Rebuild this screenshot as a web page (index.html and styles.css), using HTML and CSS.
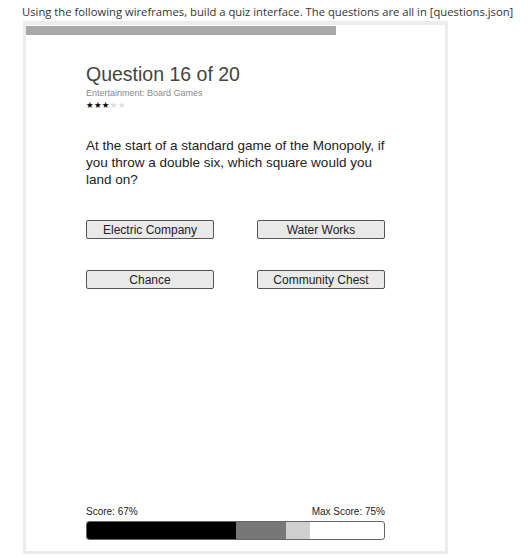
FILE: index.html
```html
<!DOCTYPE html>
<html>
<head>
<meta charset="utf-8">
<link rel="stylesheet" href="styles.css">
</head>
<body>
<p class="intro">Using the following wireframes, build a quiz interface. The questions are all in [questions.json]</p>
<div class="frame">
  <div class="progress"><div class="progress-fill" style="width:74%"></div></div>
  <div class="content">
    <h1 class="title">Question 16 of 20</h1>
    <div class="category">Entertainment: Board Games</div>
    <div class="stars"><span class="on">★★★</span><span class="off">★★</span></div>
    <p class="question">At the start of a standard game of the Monopoly, if you throw a double six, which square would you land on?</p>
    <div class="answers">
      <button class="answer">Electric Company</button>
      <button class="answer">Water Works</button>
      <button class="answer">Chance</button>
      <button class="answer">Community Chest</button>
    </div>
    <div class="score">
      <div class="score-labels"><span>Score: 67%</span><span>Max Score: 75%</span></div>
      <div class="score-bar">
        <div class="seg seg-correct" style="width:50%"></div>
        <div class="seg seg-wrong" style="width:17%"></div>
        <div class="seg seg-max" style="width:8%"></div>
      </div>
    </div>
  </div>
</div>
</body>
</html>
```

FILE: styles.css
```css
html, body {
  margin: 0;
  padding: 0;
  background: #fff;
}
.intro {
  margin: 0;
  padding: 4px 0 0 22px;
  height: 17px;
  font-family: "Open Sans", sans-serif;
  font-size: 11.25px;
  line-height: 15px;
  color: #333;
  white-space: nowrap;
}
.frame {
  box-sizing: border-box;
  margin-left: 23px;
  width: 425px;
  height: 533px;
  border: 3px solid #ececec;
  border-top-width: 4px;
  background: #fff;
  display: flex;
  flex-direction: column;
}
.progress {
  margin-top: 1px;
  height: 9px;
}
.progress-fill {
  height: 100%;
  background: #a9a9a9;
}
.content {
  flex: 1;
  padding: 0 60px 11px 60px;
  display: flex;
  flex-direction: column;
  font-family: "Liberation Sans", Arial, sans-serif;
}
.title {
  margin: 27px 0 0 0;
  font-size: 19.5px;
  line-height: 24px;
  font-weight: normal;
  color: #444;
}
.category {
  margin-top: 2px;
  font-size: 9px;
  line-height: 11px;
  color: #8a8a8a;
}
.stars {
  margin-top: 1px;
  font-family: "DejaVu Sans", sans-serif;
  font-size: 8.5px;
  line-height: 10px;
  letter-spacing: 0.3px;
}
.stars .on { color: #000; }
.stars .off { color: #ddd; }
.question {
  margin: 27px 0 0 0;
  font-size: 13.5px;
  line-height: 17px;
  color: #222;
}
.answers {
  margin-top: 32px;
  display: grid;
  grid-template-columns: 128px 128px;
  justify-content: space-between;
  row-gap: 31px;
}
.answer {
  box-sizing: border-box;
  height: 19px;
  padding: 0;
  border: 1px solid #555;
  border-radius: 2px;
  background: #e9e9e9;
  font-family: "Liberation Sans", Arial, sans-serif;
  font-size: 12px;
  color: #222;
}
.score {
  margin-top: auto;
}
.score-labels {
  display: flex;
  justify-content: space-between;
  font-size: 10px;
  line-height: 12px;
  color: #222;
}
.score-bar {
  box-sizing: border-box;
  margin-top: 3px;
  height: 19px;
  border: 1px solid #666;
  border-radius: 3px;
  overflow: hidden;
  display: flex;
  background: #fff;
}
.seg { height: 100%; }
.seg-correct { background: #000; }
.seg-wrong { background: #777; }
.seg-max { background: #cfcfcf; }
```
